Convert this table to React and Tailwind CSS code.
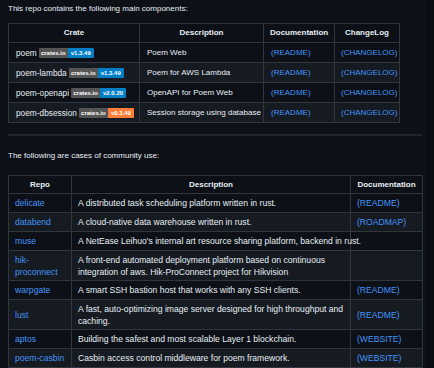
const crates = [
  { name: "poem", desc: "Poem Web", ver: "v1.3.49", color: "bg-[#007ec6]" },
  { name: "poem-lambda", desc: "Poem for AWS Lambda", ver: "v1.3.49", color: "bg-[#007ec6]" },
  { name: "poem-openapi", desc: "OpenAPI for Poem Web", ver: "v2.0.20", color: "bg-[#007ec6]" },
  { name: "poem-dbsession", desc: "Session storage using database", ver: "v0.3.49", color: "bg-[#fe7d37]" },
];

const uses = [
  { repo: ["delicate"], desc: ["A distributed task scheduling platform written in rust."], doc: "(README)" },
  { repo: ["databend"], desc: ["A cloud-native data warehouse written in rust."], doc: "(ROADMAP)" },
  { repo: ["muse"], desc: ["A NetEase Leihuo's internal art resource sharing platform, backend in rust."], doc: "" },
  {
    repo: ["hik-", "proconnect"],
    desc: ["A front-end automated deployment platform based on continuous", "integration of aws. Hik-ProConnect project for Hikvision"],
    doc: "",
  },
  { repo: ["warpgate"], desc: ["A smart SSH bastion host that works with any SSH clients."], doc: "(README)" },
  {
    repo: ["lust"],
    desc: ["A fast, auto-optimizing image server designed for high throughput and", "caching."],
    doc: "(README)",
  },
  { repo: ["aptos"], desc: ["Building the safest and most scalable Layer 1 blockchain."], doc: "(WEBSITE)" },
  { repo: ["poem-casbin"], desc: ["Casbin access control middleware for poem framework."], doc: "(WEBSITE)" },
];

function Badge({ ver, color }) {
  return (
    <span className="inline-flex h-[10px] items-center text-[6px] font-bold leading-none text-white">
      <span className="flex h-full w-[29px] items-center justify-center rounded-l-[1px] bg-[#555]">crates.io</span>
      <span className={`flex h-full w-[26px] items-center justify-center rounded-r-[1px] ${color}`}>{ver}</span>
    </span>
  );
}

const th = "border border-[#30363d] px-[6px] p-0 font-bold text-center text-[8px] leading-[12px] text-[#e6edf3] whitespace-nowrap";
const td = "border border-[#30363d] px-[6px] p-0 whitespace-nowrap leading-[12px]";

export default function App() {
  return (
    <div className="flex min-h-[368px] w-[434px] bg-[#0d1117] text-[8px] text-[#e6edf3]" style={{ fontFamily: "'Liberation Sans', Arial, sans-serif" }}>
      <div className="w-[426px] pl-[8px] pt-[3px]">
        <p className="leading-[12px]">This repo contains the following main components:</p>
        <table className="mt-[8px] w-[391px] table-fixed border-collapse text-[8px]">
          <colgroup>
            <col className="w-[131px]" />
            <col className="w-[124px]" />
            <col className="w-[71px]" />
            <col className="w-[65px]" />
          </colgroup>
          <thead>
            <tr className="h-[19px]">
              <th className={th}>Crate</th>
              <th className={th}>Description</th>
              <th className={th}>Documentation</th>
              <th className={th}>ChangeLog</th>
            </tr>
          </thead>
          <tbody>
            {crates.map((c, i) => (
              <tr key={c.name} className={`h-[20px] ${i % 2 ? "bg-[#161b22]" : ""}`}>
                <td className={`${td} pl-[7px]`}>
                  <span className="flex items-center gap-[2px]">
                    <span className="text-[8.3px]">{c.name}</span>
                    <Badge ver={c.ver} color={c.color} />
                  </span>
                </td>
                <td className={`${td} pl-[7px]`}>{c.desc}</td>
                <td className={`${td} pl-[7px] text-[#4493f8]`}>(README)</td>
                <td className={`${td} text-[#4493f8]`}>(CHANGELOG)</td>
              </tr>
            ))}
          </tbody>
        </table>
        <div className="mt-[11px] h-[2px] w-[414px] bg-[#21262d]" />
        <p className="mt-[14px] leading-[12px]">The following are cases of community use:</p>
        <table className="mt-[13px] w-[414px] table-fixed border-collapse text-[8.6px]">
          <colgroup>
            <col className="w-[63px]" />
            <col className="w-[279px]" />
            <col className="w-[72px]" />
          </colgroup>
          <thead>
            <tr className="h-[18px]">
              <th className={th}>Repo</th>
              <th className={th}>Description</th>
              <th className={th}>Documentation</th>
            </tr>
          </thead>
          <tbody>
            {uses.map((u, i) => (
              <tr key={u.repo.join("")} className={`${u.desc.length > 1 ? "h-[30px]" : "h-[19px]"} ${i % 2 ? "bg-[#161b22]" : ""}`}>
                <td className={`${td} text-[#4493f8]`}>
                  {u.repo.map((l) => (
                    <div key={l}>{l}</div>
                  ))}
                </td>
                <td className={td}>
                  {u.desc.map((l) => (
                    <div key={l}>{l}</div>
                  ))}
                </td>
                <td className={`${td} text-[#4493f8]`}>{u.doc}</td>
              </tr>
            ))}
          </tbody>
        </table>
      </div>
      <div className="flex-1 bg-[#0a0d12]" />
    </div>
  );
}
